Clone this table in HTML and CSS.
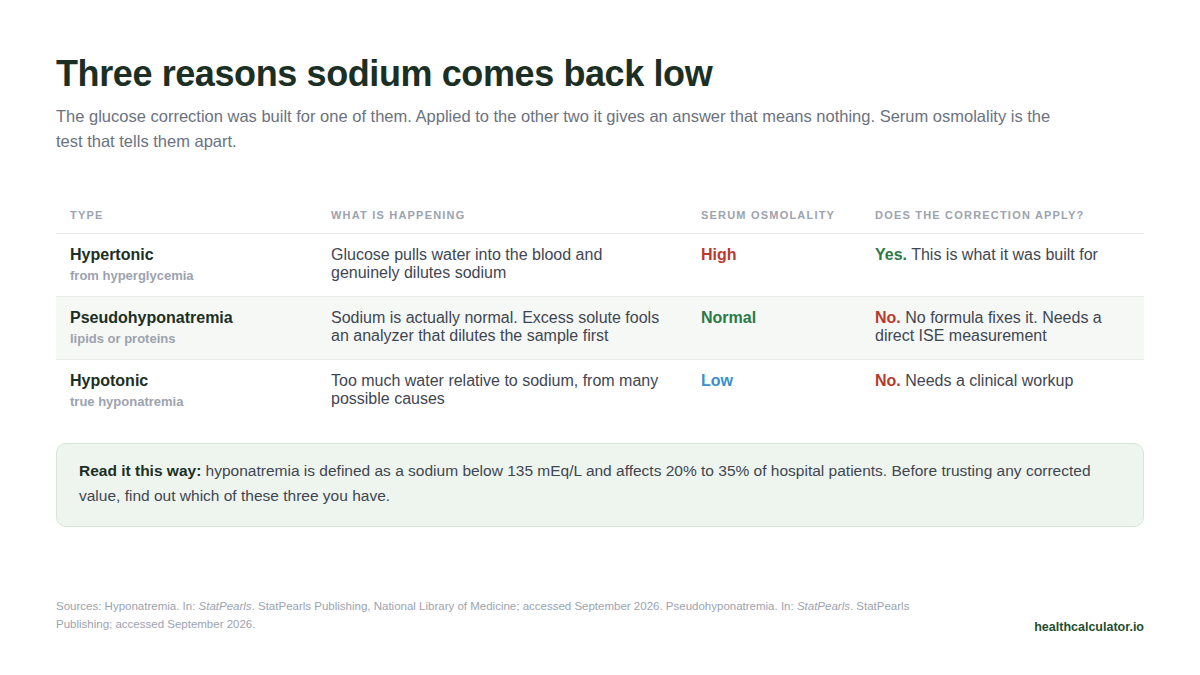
FILE: index.html
```html
<!DOCTYPE html>
<html lang="en">
<head>
<meta charset="utf-8">
<title>Three reasons sodium comes back low</title>
<link rel="stylesheet" href="styles.css">
</head>
<body>
<main class="page">
  <h1 class="title">Three reasons sodium comes back low</h1>
  <p class="subtitle">The glucose correction was built for one of them. Applied to the other two it gives an answer that means nothing. Serum osmolality is the test that tells them apart.</p>

  <table class="grid">
    <colgroup>
      <col class="c1"><col class="c2"><col class="c3"><col class="c4">
    </colgroup>
    <thead>
      <tr>
        <th>Type</th>
        <th>What is happening</th>
        <th>Serum osmolality</th>
        <th>Does the correction apply?</th>
      </tr>
    </thead>
    <tbody>
      <tr>
        <td><div class="name">Hypertonic</div><div class="sub">from hyperglycemia</div></td>
        <td class="desc">Glucose pulls water into the blood and genuinely dilutes sodium</td>
        <td class="osm high">High</td>
        <td class="desc"><span class="yes">Yes.</span> This is what it was built for</td>
      </tr>
      <tr class="alt">
        <td><div class="name">Pseudohyponatremia</div><div class="sub">lipids or proteins</div></td>
        <td class="desc">Sodium is actually normal. Excess solute fools an analyzer that dilutes the sample first</td>
        <td class="osm normal">Normal</td>
        <td class="desc"><span class="no">No.</span> No formula fixes it. Needs a direct ISE measurement</td>
      </tr>
      <tr>
        <td><div class="name">Hypotonic</div><div class="sub">true hyponatremia</div></td>
        <td class="desc">Too much water relative to sodium, from many possible causes</td>
        <td class="osm low">Low</td>
        <td class="desc"><span class="no">No.</span> Needs a clinical workup</td>
      </tr>
    </tbody>
  </table>

  <div class="callout">
    <p class="callout-text"><strong>Read it this way:</strong> hyponatremia is defined as a sodium below 135 mEq/L and affects 20% to 35% of hospital patients. Before trusting any corrected value, find out which of these three you have.</p>
  </div>

  <footer class="foot">
    <p class="sources">Sources: Hyponatremia. In: <em>StatPearls</em>. StatPearls Publishing, National Library of Medicine; accessed September 2026. Pseudohyponatremia. In: <em>StatPearls</em>. StatPearls Publishing; accessed September 2026.</p>
    <div class="brand">healthcalculator.io</div>
  </footer>
</main>
</body>
</html>
```

FILE: styles.css
```css
* { box-sizing: border-box; }
html, body { margin: 0; padding: 0; background: #ffffff; }
body {
  font-family: "Liberation Sans", Arial, sans-serif;
  width: 1200px;
  height: 675px;
  overflow: hidden;
}
.page {
  padding: 52px 56px 0 56px;
  display: flex;
  flex-direction: column;
}
.title {
  margin: 0;
  font-size: 36px;
  line-height: 43px;
  font-weight: 700;
  color: #1b2f24;
  letter-spacing: -0.4px;
}
.subtitle {
  margin: 9px 0 0 0;
  max-width: 1010px;
  font-size: 16.5px;
  line-height: 25px;
  color: #6b7280;
}
.grid {
  margin-top: 43px;
  width: 1088px;
  border-collapse: collapse;
  table-layout: fixed;
}
.c1 { width: 261px; }
.c2 { width: 370px; }
.c3 { width: 174px; }
.c4 { width: 283px; }
.grid th {
  text-align: left;
  padding: 11px 14px 11px 14px;
  font-size: 11px;
  line-height: 14px;
  font-weight: 700;
  letter-spacing: 1.2px;
  text-transform: uppercase;
  color: #9ca3af;
}
.grid td {
  vertical-align: top;
  padding: 11px 14px 10px 14px;
  border-top: 1px solid #e8ece9;
}
.grid tr.alt td { background: #f6f8f6; }
.name {
  font-size: 16px;
  line-height: 20px;
  font-weight: 700;
  color: #1b2f24;
}
.sub {
  margin-top: 1px;
  font-size: 13px;
  line-height: 20px;
  font-weight: 700;
  color: #9ca3af;
}
.grid td.desc {
  font-size: 16px;
  line-height: 18px;
  padding-top: 12px;
  color: #3f4652;
}
.osm {
  font-size: 16px;
  line-height: 20px;
  font-weight: 700;
}
.high { color: #b83a2e; }
.normal { color: #2a7a46; }
.low { color: #3b8fd0; }
.yes { color: #2a7a46; font-weight: 700; }
.no { color: #b83a2e; font-weight: 700; }
.callout {
  margin-top: 21px;
  background: #eef5ee;
  border: 1px solid #d6e6d8;
  border-radius: 10px;
  padding: 14px 22px 18px 22px;
}
.callout-text {
  margin: 0;
  font-size: 15.5px;
  line-height: 25px;
  color: #3f4652;
}
.callout-text strong { color: #1b2f24; }
.foot {
  margin-top: 70px;
  display: flex;
  justify-content: space-between;
  align-items: flex-end;
}
.sources {
  margin: 0;
  max-width: 900px;
  font-size: 11.5px;
  line-height: 18px;
  color: #9ca3af;
}
.brand {
  font-size: 12.5px;
  line-height: 18px;
  font-weight: 700;
  color: #1f4d2e;
  margin-bottom: -3px;
}
```
